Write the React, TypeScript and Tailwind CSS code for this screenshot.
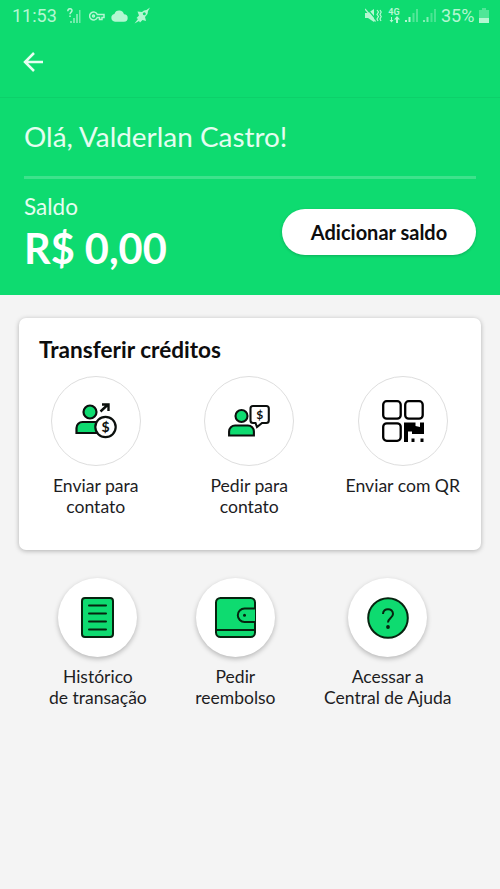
import type { ReactNode } from "react";

function StatusBar() {
  return (
    <div className="flex h-[31px] items-center justify-between pl-3 pr-[11px] font-['Roboto',sans-serif] text-[18px] leading-none text-[#b4f7d2]">
      <div className="flex items-center">
        <span className="w-[46px] whitespace-nowrap">11:53</span>
        <svg className="ml-[9px]" width="14" height="16" viewBox="0 0 14 16" fill="currentColor">
          <path d="M3 13h2v2H3zM6 10h2v5H6zM9 6h2v9H9zM12 2h1.500v13H12z" opacity=".6" />
          <path d="M.8 3.200C.8 0 5 0 5 2.600 5 4.500 3 4.300 3 6.200M3 7.500v1.500" fill="none" stroke="currentColor" strokeWidth="1.500" />
        </svg>
        <svg className="ml-[8px]" width="16" height="10" viewBox="0 0 16 10" fill="none" stroke="currentColor" strokeWidth="1.500">
          <path d="M8.300 3.500A4 4 0 1 0 8.300 6.500H10.500V8.500H13V6.500H15V3.500Z" />
          <circle cx="4.500" cy="5" r="1" />
        </svg>
        <svg className="ml-[6px]" width="17" height="12" viewBox="0 0 17 12" fill="currentColor">
          <path d="M4 11.700a3.900 3.900 0 0 1-.6-7.700A5 5 0 0 1 13 4.300a3.700 3.700 0 0 1 0 7.400Z" />
        </svg>
        <svg className="ml-[6px]" width="17" height="17" viewBox="0 0 17 17" fill="currentColor">
          <path d="M16 .5 12.500 3 10 3.500 8 5 3.500 4.500l1.500 4L2.500 11l1.500 1L.5 16.500 5 14l1 1.500L8.500 13l3.500 1-1-4L13.500 7 14 4Z" />
          <circle cx="10.300" cy="6.700" r="1.500" fill="#0edb70" />
        </svg>
      </div>
      <div className="flex items-center">
        <svg width="17" height="15" viewBox="0 0 17 15" fill="currentColor">
          <path d="M0 5h3l6-4v13l-6-4H0Z" />
          <path d="M1.500 0 12 12.500" fill="none" stroke="#0edb70" strokeWidth="1.200" />
          <path d="m0 1 10.500 12.500" fill="none" stroke="currentColor" strokeWidth="1.200" />
          <path d="m12 2 1.500 2L12 6.500l1.500 2-1.500 2.500 1 2M15 2l1.200 2L15 6.500l1.200 2L15 11l1 2" fill="none" stroke="currentColor" strokeWidth="1.200" />
        </svg>
        <div className="ml-[6px] flex w-[12px] flex-col items-center">
          <span className="text-[9px] font-bold leading-[8px]">4G</span>
          <svg width="11" height="7" viewBox="0 0 11 7" fill="currentColor">
            <path d="M2 1h1v3h1.500l-2 2.500L.5 4H2ZM7 7V3.500H5L8 0l3 3.500H9V7Z" />
          </svg>
        </div>
        <svg className="ml-[5px]" width="14" height="15" viewBox="0 0 14 15" fill="currentColor">
          <path d="M0 12h2v2H0zM3.500 9h2v5h-2z" />
          <path d="M7.500 5h2v9h-2zM11 1h2v13h-2z" opacity=".4" />
        </svg>
        <svg className="ml-[4px]" width="14" height="15" viewBox="0 0 14 15" fill="currentColor">
          <path d="M0 12h2v2H0zM3.500 9h2v5h-2z" opacity=".7" />
          <path d="M7.500 5h2v9h-2zM11 1h2v13h-2z" opacity=".35" />
        </svg>
        <span className="ml-[4px] w-[35px] whitespace-nowrap">35%</span>
        <svg className="ml-[3px]" width="10" height="15" viewBox="0 0 10 15" fill="currentColor">
          <path d="M3 0h4v2h3v8H0V2h3Z" opacity=".4" />
          <path d="M0 10h10v5H0z" />
        </svg>
      </div>
    </div>
  );
}

function SendIcon() {
  return (
    <svg width="42" height="36" viewBox="0 0 42 36" fill="#0edb70" stroke="#0b0f0d" strokeWidth="2.200">
      <circle cx="15" cy="9" r="6.500" />
      <path d="M1.500 30v-5a6 6 0 0 1 6-6H24v11Z" />
      <path d="m25.500 8.500 7.500-7M27 1.500h6.500v6.500" fill="none" strokeWidth="2.400" />
      <circle cx="30.500" cy="24" r="10.200" fill="#fff" />
      <text x="30.500" y="28.800" textAnchor="middle" fill="#0b0f0d" stroke="none" className="font-['Lato',sans-serif] text-[14px] font-bold">$</text>
    </svg>
  );
}

function RequestIcon() {
  return (
    <svg width="42" height="34" viewBox="0 0 42 34" fill="#0edb70" stroke="#0b0f0d" strokeWidth="2.100">
      <circle cx="13.500" cy="12" r="6" />
      <path d="M1.100 31.500v-4a6 6 0 0 1 6-6h12.800a6 6 0 0 1 6 6v4Z" />
      <path d="M25 2h13.300a2.500 2.500 0 0 1 2.500 2.500v12a2.500 2.500 0 0 1-2.500 2.500H34l-5 4-1.500-4H25a2.500 2.500 0 0 1-2.500-2.500v-12A2.500 2.500 0 0 1 25 2Z" fill="#fff" />
      <text x="31.700" y="14.700" textAnchor="middle" fill="#0b0f0d" stroke="none" className="font-['Lato',sans-serif] text-[12px] font-bold">$</text>
    </svg>
  );
}

function QrIcon() {
  return (
    <svg width="42" height="42" viewBox="0 0 42 42" fill="none" stroke="#000" strokeWidth="2.300">
      <rect x="1.200" y="1.200" width="17.500" height="17.500" rx="3.500" />
      <rect x="23.200" y="1.200" width="17.500" height="17.500" rx="3.500" />
      <rect x="1.200" y="23.300" width="17.500" height="17.500" rx="3.500" />
      <path d="M22 22.500h11.500v3.500l4.500 1v-4.500h4V34H30v-2.500h-4V42H22ZM29.500 38.500h3V42h-3zM38.500 38.500h3V42h-3z" fill="#000" stroke="none" />
    </svg>
  );
}

function HistoryIcon() {
  return (
    <svg width="33" height="41" viewBox="0 0 33 41" fill="#0edb70" stroke="#06240f" strokeWidth="2">
      <rect x="1" y="1" width="31" height="39" rx="3" />
      <path d="M8 8.500h17M8 16.500h17M8 24.500h17M8 32.500h17" strokeLinecap="round" />
    </svg>
  );
}

function WalletIcon() {
  return (
    <svg width="41" height="41" viewBox="0 0 41 41" fill="#0edb70" stroke="#06240f" strokeWidth="2">
      <rect x="1" y="1" width="39" height="39" rx="4.500" />
      <path d="M1 33h39M40 11.500H29.500a6.700 6.700 0 0 0 0 13.400H40" />
      <circle cx="29.500" cy="18.200" r="1.500" fill="#06240f" stroke="none" />
    </svg>
  );
}

function HelpIcon() {
  return (
    <svg width="42" height="42" viewBox="0 0 42 42" fill="#0edb70" stroke="#06240f" strokeWidth="2">
      <circle cx="21" cy="21" r="19.800" />
      <path d="M16 17c0-6.500 10-6.500 10 0 0 4-5 4.200-5 8.500" fill="none" />
      <circle cx="21" cy="30" r="1.900" fill="#06240f" stroke="none" />
    </svg>
  );
}

function Transfer({ icon, children }: { icon: ReactNode; children: ReactNode }) {
  return (
    <button className="flex w-[153.500px] flex-col items-center">
      <span className="flex size-[90px] items-center justify-center rounded-full border border-[#dedede]">{icon}</span>
      <span className="mt-[9px] whitespace-nowrap text-[17.6px] leading-[21px] text-[#1d1d1f]">{children}</span>
    </button>
  );
}

function Action({ icon, children }: { icon: ReactNode; children: ReactNode }) {
  return (
    <button className="flex flex-col items-center">
      <span className="flex size-[79px] items-center justify-center rounded-full bg-white shadow-[0_2px_5px_rgba(0,0,0,0.25)]">{icon}</span>
      <span className="mt-[9px] whitespace-nowrap text-[17.5px] leading-[21px] text-[#1d1d1f]">{children}</span>
    </button>
  );
}

export default function App() {
  return (
    <main className="h-[889px] w-[500px] overflow-hidden bg-[#f4f4f4] font-['Lato',sans-serif]">
      <header className="h-[295px] bg-[#0edb70] text-white">
        <div className="h-[98px] border-b border-[#0dd06a]">
          <StatusBar />
          <button className="ml-[23px] mt-[21px] block" aria-label="Voltar">
            <svg width="21" height="20" viewBox="0 0 21 20" fill="none" stroke="#e8fff2" strokeWidth="2.500">
              <path d="M20 10H2M11 1l-9 9 9 9" />
            </svg>
          </button>
        </div>
        <div className="px-6 pt-[21px]">
          <h1 className="whitespace-nowrap text-[27.9px] leading-[34px] text-[#e5fdf0]">Olá, Valderlan Castro!</h1>
          <div className="mt-[23px] h-[3px] bg-[#3ee28c]" />
          <div className="mt-[13px] flex items-start justify-between">
            <div>
              <p className="pt-px text-[22.5px] leading-[28px] text-[#e5fdf0]">Saldo</p>
              <p className="mt-[2px] whitespace-nowrap text-[41.5px] font-bold leading-[50px]">R$ 0,00</p>
            </div>
            <button className="mt-[17px] h-[46px] w-[194px] whitespace-nowrap rounded-full bg-white text-[20px] font-bold text-[#0d0d0d] shadow-[0_1px_3px_rgba(0,0,0,0.2)]">Adicionar saldo</button>
          </div>
        </div>
      </header>
      <section className="ml-[19px] mt-[23px] h-[232px] w-[462px] rounded-[7px] bg-white pt-[17px] shadow-[0_1px_5px_rgba(0,0,0,0.28)]">
        <h2 className="ml-5 whitespace-nowrap text-[22.6px] font-bold leading-[30px] text-[#0d0d0d]">Transferir créditos</h2>
        <div className="mt-[11px] flex">
          <Transfer icon={<SendIcon />}>Enviar para<br />contato</Transfer>
          <Transfer icon={<RequestIcon />}>Pedir para<br />contato</Transfer>
          <Transfer icon={<QrIcon />}>Enviar com QR</Transfer>
        </div>
      </section>
      <section className="mt-[28px] flex justify-between pl-[49px] pr-[48.500px]">
        <Action icon={<HistoryIcon />}>Histórico<br />de transação</Action>
        <Action icon={<WalletIcon />}>Pedir<br />reembolso</Action>
        <Action icon={<HelpIcon />}>Acessar a<br />Central de Ajuda</Action>
      </section>
    </main>
  );
}
